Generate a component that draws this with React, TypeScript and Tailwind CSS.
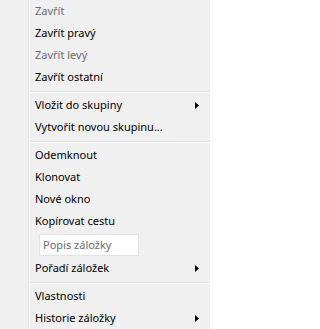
import React from "react";

type Item =
  | { kind: "item"; label: string; disabled?: boolean; submenu?: boolean }
  | { kind: "sep" }
  | { kind: "input"; placeholder: string };

const ITEMS: Item[] = [
  { kind: "item", label: "Zavřít", disabled: true },
  { kind: "item", label: "Zavřít pravý" },
  { kind: "item", label: "Zavřít levý", disabled: true },
  { kind: "item", label: "Zavřít ostatní" },
  { kind: "sep" },
  { kind: "item", label: "Vložit do skupiny", submenu: true },
  { kind: "item", label: "Vytvořit novou skupinu..." },
  { kind: "sep" },
  { kind: "item", label: "Odemknout" },
  { kind: "item", label: "Klonovat" },
  { kind: "item", label: "Nové okno" },
  { kind: "item", label: "Kopírovat cestu" },
  { kind: "input", placeholder: "Popis záložky" },
  { kind: "item", label: "Pořadí záložek", submenu: true },
  { kind: "sep" },
  { kind: "item", label: "Vlastnosti" },
  { kind: "item", label: "Historie záložky", submenu: true },
];

function Arrow() {
  return (
    <svg width="4" height="7" viewBox="0 0 4 7" className="mr-[11px]">
      <path d="M0 0 L4 3.5 L0 7 Z" fill="#000" />
    </svg>
  );
}

export default function App() {
  return (
    <div
      className="w-[210px] h-[329px] overflow-hidden bg-[#f0f0f0] flex text-[11px]"
      style={{ fontFamily: '"Noto Sans", "Open Sans", sans-serif' }}
    >
      {/* gutter where icons would go */}
      <div className="w-[28px] shrink-0" />
      <div className="w-px shrink-0 bg-[#e2e3e3]" />
      <div className="w-px shrink-0 bg-white" />

      <div className="flex-1 flex flex-col">
        {ITEMS.map((it, i) => {
          if (it.kind === "sep") {
            return (
              <div key={i} className="h-[6px] flex flex-col pt-[3px]">
                <div className="h-px bg-[#e0e0e0]" />
                <div className="h-px bg-white" />
              </div>
            );
          }
          if (it.kind === "input") {
            return (
              <div key={i} className="h-[25px] pt-[2px] pl-[9px]">
                <div className="w-[100px] h-[22px] bg-white border border-[#e3e3e3] flex items-center pl-[3px] text-[#6d6d6d]">
                  {it.placeholder}
                </div>
              </div>
            );
          }
          return (
            <div
              key={i}
              className={`h-[22px] flex items-center justify-between pl-[5px] ${
                it.disabled ? "text-[#6d6d6d]" : "text-black"
              }`}
            >
              <span>{it.label}</span>
              {it.submenu && <Arrow />}
            </div>
          );
        })}
      </div>
    </div>
  );
}
